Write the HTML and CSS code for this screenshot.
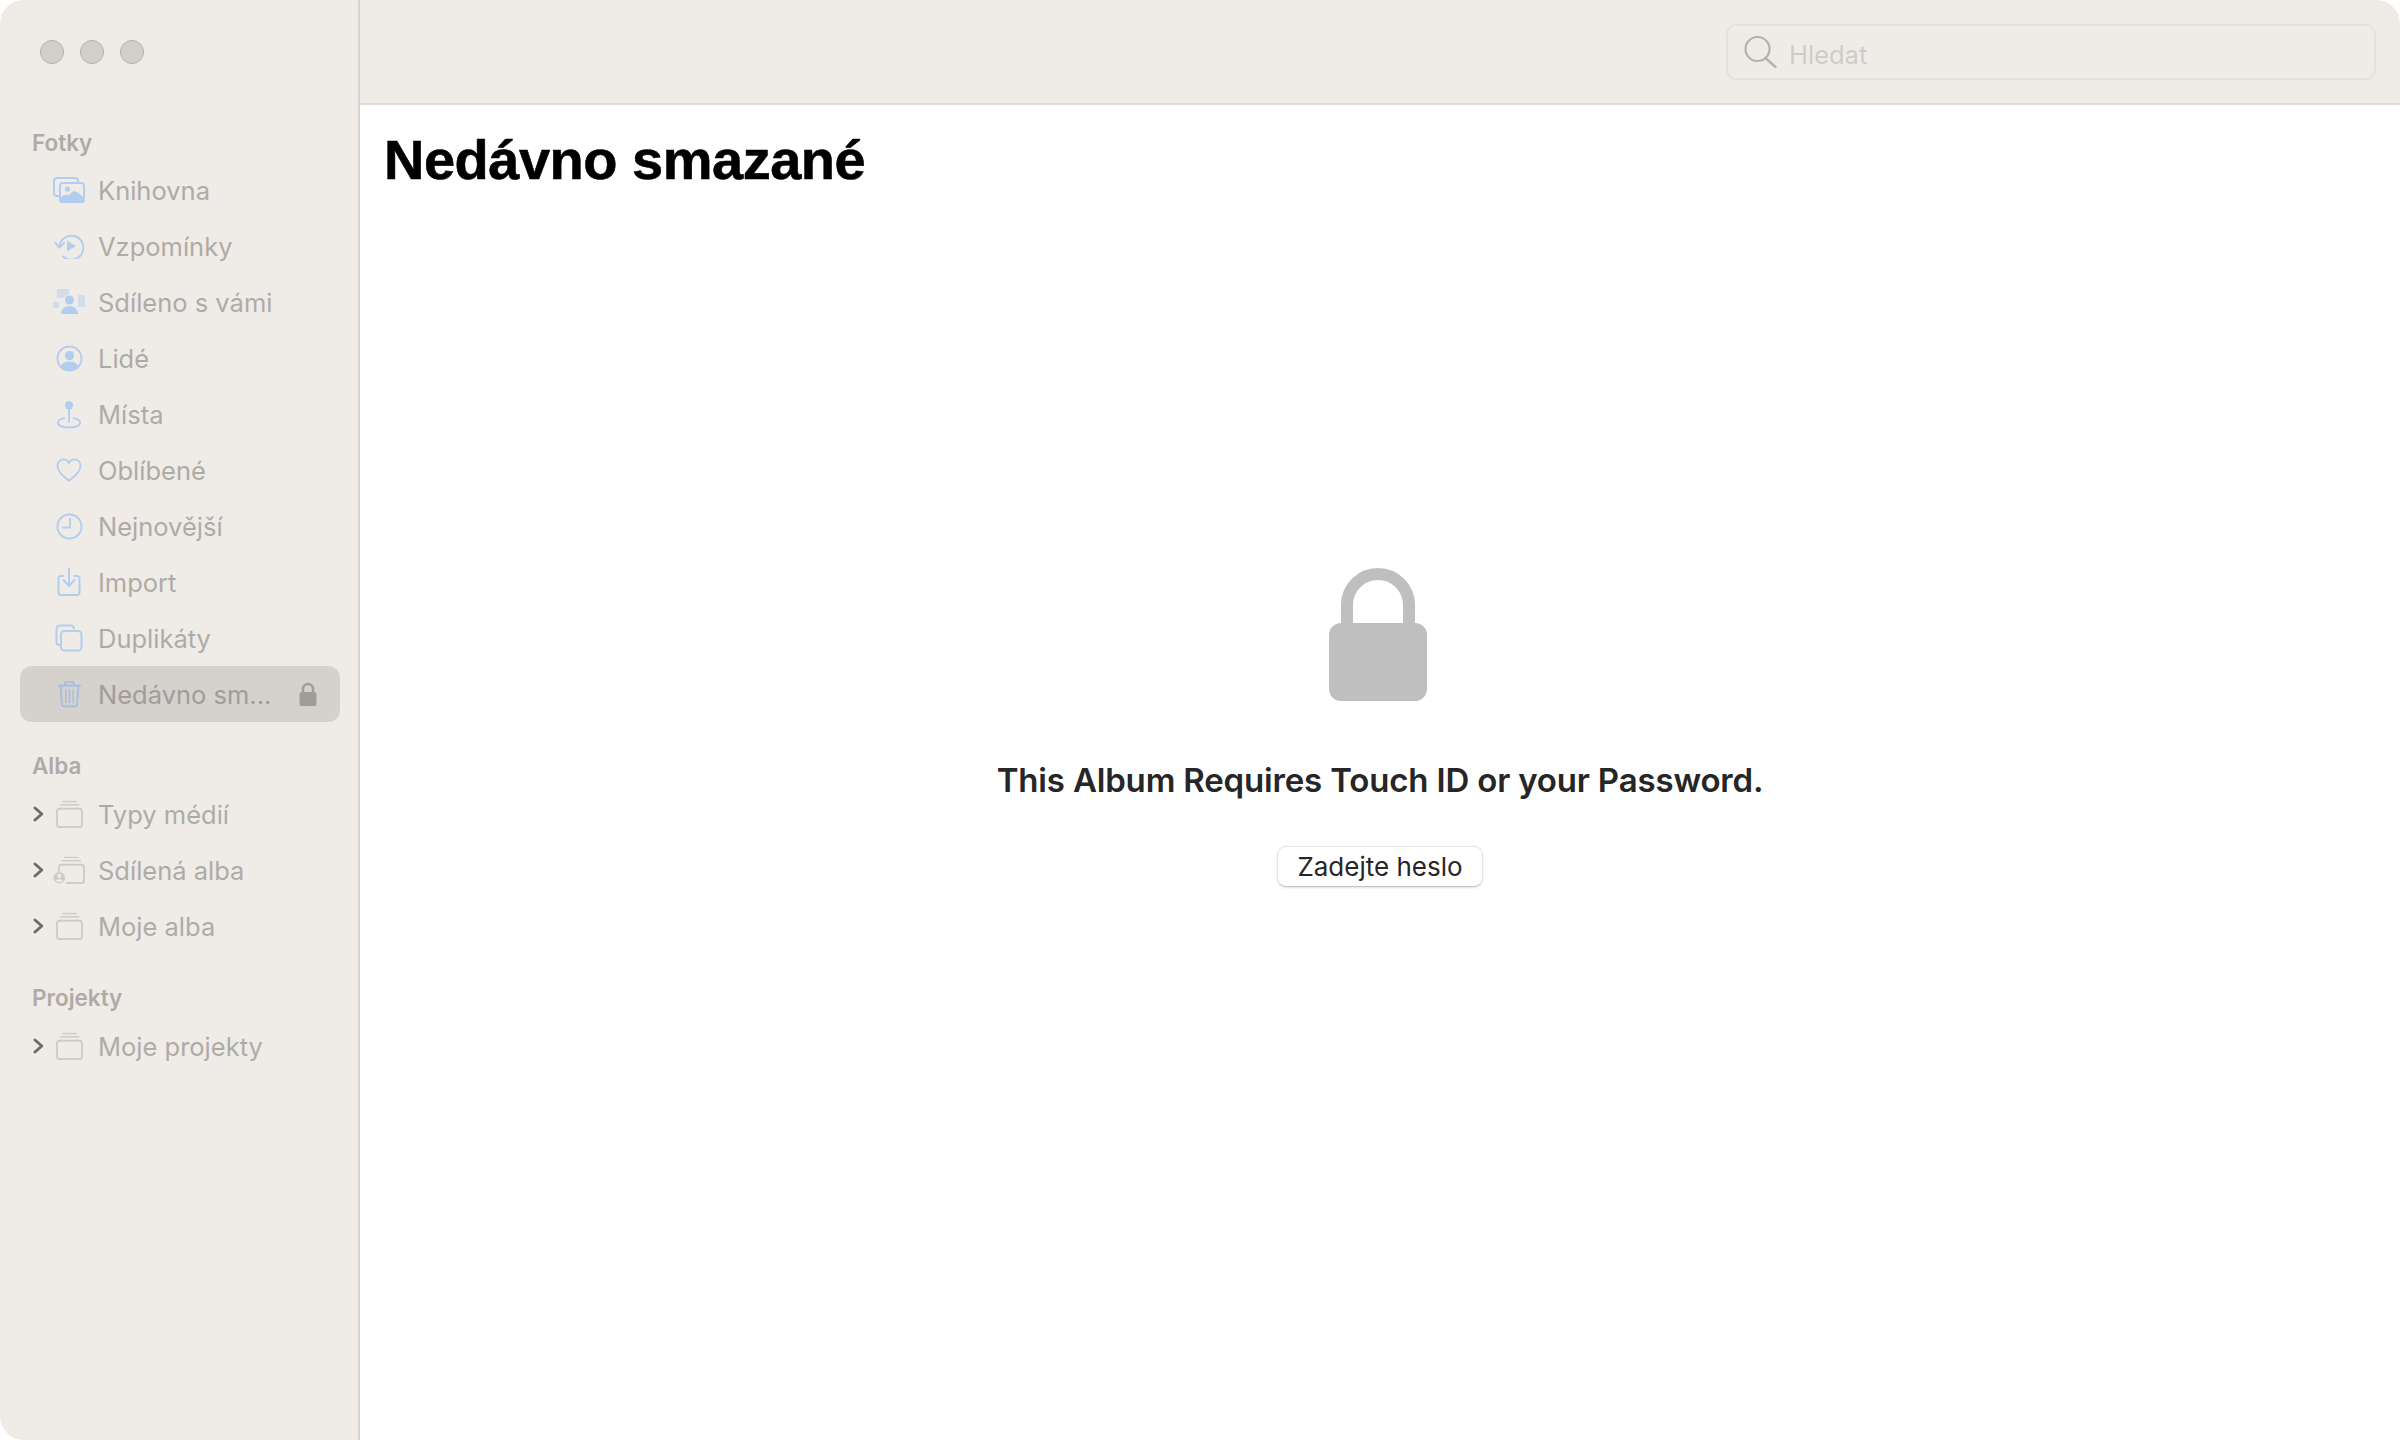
FILE: index.html
```html
<!DOCTYPE html>
<html lang="cs">
<head>
<meta charset="utf-8">
<title>Fotky</title>
<link rel="stylesheet" href="styles.css">
</head>
<body>
<div class="window">
  <aside class="sidebar">
    <div class="traffic"><span class="dot"></span><span class="dot"></span><span class="dot"></span></div>
    <div class="sec-title first">Fotky</div>
    <div class="row">
      <svg class="ico blue" width="32" height="26" viewBox="0 0 32 26"><rect x="1" y="1" width="24" height="18" rx="3" fill="none" stroke="currentColor" stroke-width="2"/><rect x="7" y="6" width="24" height="19" rx="3" fill="#efece7" stroke="currentColor" stroke-width="2"/><circle cx="14.500" cy="12" r="2.600" fill="currentColor"/><path d="M6 23c2-3 5-6 8-5 3 .5 4-3 7-4 3 0 7 4 11 8v1a3 3 0 0 1-3 3H9a3 3 0 0 1-3-3z" fill="currentColor"/></svg>
      <span class="label">Knihovna</span>
    </div>
    <div class="row">
      <svg class="ico blue" width="30" height="26" viewBox="0 0 30 26"><path d="M5.500 13A12 12 0 1 1 9 23.400" fill="none" stroke="currentColor" stroke-width="2" stroke-linecap="round"/><path d="M1.500 10l4 4.500 4.500-4.500" fill="none" stroke="currentColor" stroke-width="2" stroke-linecap="round" stroke-linejoin="round"/><path d="M13 7.500l9 5.500-9 5.500z" fill="currentColor"/></svg>
      <span class="label">Vzpomínky</span>
    </div>
    <div class="row">
      <svg class="ico blue" width="32" height="26" viewBox="0 0 32 26"><path d="M4 0h12v5l-6 4H4z" fill="currentColor" opacity=".5"/><rect x="0" y="13" width="6" height="6" fill="currentColor" opacity=".5"/><rect x="25" y="6" width="7" height="12" fill="currentColor" opacity=".5"/><circle cx="16.500" cy="11" r="4.500" fill="currentColor"/><path d="M8 25c0-5 4-8 8.500-8S25 20 25 25z" fill="currentColor"/></svg>
      <span class="label">Sdíleno s vámi</span>
    </div>
    <div class="row">
      <svg class="ico blue" width="27" height="27" viewBox="0 0 28 28"><circle cx="14" cy="14" r="12.500" fill="none" stroke="currentColor" stroke-width="2"/><circle cx="14" cy="11" r="4.800" fill="currentColor"/><path d="M5 22c2-4 5-5 9-5s7 1 9 5c-2 3-5 5-9 5s-7-2-9-5z" fill="currentColor"/></svg>
      <span class="label">Lidé</span>
    </div>
    <div class="row">
      <svg class="ico blue" width="26" height="29" viewBox="0 0 28 30"><circle cx="14" cy="5" r="4.500" fill="currentColor"/><path d="M14 9v15" stroke="currentColor" stroke-width="2"/><path d="M9 19c-4 .8-7 2.500-7 5 0 3 5 5 12 5s12-2 12-5c0-2.500-3-4.200-7-5" fill="none" stroke="currentColor" stroke-width="2" stroke-linecap="round"/></svg>
      <span class="label">Místa</span>
    </div>
    <div class="row">
      <svg class="ico blue" width="26" height="24" viewBox="0 0 28 26"><path d="M14 24.500C6 19 1.500 14 1.500 8.500 1.500 4.500 4.500 1.500 8 1.500c2.700 0 4.800 1.500 6 4 1.200-2.500 3.300-4 6-4 3.500 0 6.500 3 6.500 7 0 5.500-4.500 10.500-12.500 16z" fill="none" stroke="currentColor" stroke-width="2" stroke-linejoin="round"/></svg>
      <span class="label">Oblíbené</span>
    </div>
    <div class="row">
      <svg class="ico blue" width="27" height="27" viewBox="0 0 28 28"><circle cx="14" cy="14" r="12.500" fill="none" stroke="currentColor" stroke-width="2"/><path d="M14.500 6v9H7" fill="none" stroke="currentColor" stroke-width="2" stroke-linecap="round" stroke-linejoin="round"/></svg>
      <span class="label">Nejnovější</span>
    </div>
    <div class="row">
      <svg class="ico blue" width="24" height="28" viewBox="0 0 24 28"><path d="M6.500 8H4A2.500 2.500 0 0 0 1.500 10.500v14A2.500 2.500 0 0 0 4 27h16a2.500 2.500 0 0 0 2.500-2.500v-14A2.500 2.500 0 0 0 20 8h-2.500" fill="none" stroke="currentColor" stroke-width="2" stroke-linecap="round"/><path d="M12 1v16M6.500 12l5.500 6 5.500-6" fill="none" stroke="currentColor" stroke-width="2" stroke-linecap="round" stroke-linejoin="round"/></svg>
      <span class="label">Import</span>
    </div>
    <div class="row">
      <svg class="ico blue" width="28" height="28" viewBox="0 0 28 28"><path d="M4.500 21A3 3 0 0 1 1.500 18V5a3.500 3.500 0 0 1 3.500-3.500h11A3.500 3.500 0 0 1 19 4.500" fill="none" stroke="currentColor" stroke-width="2" stroke-linecap="round"/><rect x="6" y="7" width="20.500" height="19.500" rx="3.500" fill="none" stroke="currentColor" stroke-width="2"/></svg>
      <span class="label">Duplikáty</span>
    </div>
    <div class="row selected">
      <svg class="ico blue" width="25" height="28" viewBox="0 0 28 30"><path d="M2 5.500h24M9 5V3.500A2 2 0 0 1 11 1.500h6a2 2 0 0 1 2 2V5" fill="none" stroke="currentColor" stroke-width="2" stroke-linecap="round"/><path d="M4 6l1.500 21a2 2 0 0 0 2 1.800h13a2 2 0 0 0 2-1.800L24 6" fill="none" stroke="currentColor" stroke-width="2"/><path d="M10 10.500v14M14 10.500v14M18 10.500v14" stroke="currentColor" stroke-width="1.500" stroke-linecap="round"/></svg>
      <span class="label">Nedávno sm...</span>
      <svg class="row-lock" width="18" height="24" viewBox="0 0 18 24"><path d="M4 11V7a5 5 0 0 1 10 0v4" fill="none" stroke="currentColor" stroke-width="2.400"/><rect x="0.500" y="10" width="17" height="14" rx="2.500" fill="currentColor"/></svg>
    </div>

    <div class="sec-title alba">Alba</div>
    <div class="row">
      <svg class="chev" width="11" height="16" viewBox="0 0 10 14"><path d="M1.800 1.500L8 7l-6.200 5.500" fill="none" stroke="currentColor" stroke-width="2.600" stroke-linecap="round" stroke-linejoin="round"/></svg>
      <svg class="ico gray" width="27" height="28" viewBox="0 0 28 28"><path d="M7 1h14M4.500 4.500h19" stroke="currentColor" stroke-width="1.500" stroke-linecap="round"/><rect x="1" y="8.500" width="26" height="19" rx="3" fill="none" stroke="currentColor" stroke-width="2"/></svg>
      <span class="label">Typy médií</span>
    </div>
    <div class="row">
      <svg class="chev" width="11" height="16" viewBox="0 0 10 14"><path d="M1.800 1.500L8 7l-6.200 5.500" fill="none" stroke="currentColor" stroke-width="2.600" stroke-linecap="round" stroke-linejoin="round"/></svg>
      <svg class="ico gray" width="32" height="28" viewBox="0 0 33 28"><path d="M12 1h14M9.500 4.500h19" stroke="currentColor" stroke-width="1.500" stroke-linecap="round"/><path d="M6 15v-3.500a3 3 0 0 1 3-3h20a3 3 0 0 1 3 3v13a3 3 0 0 1-3 3H14" fill="none" stroke="currentColor" stroke-width="2" stroke-linecap="round"/><circle cx="6.500" cy="22" r="6" fill="currentColor"/><circle cx="6.500" cy="20" r="2.200" fill="#efece7"/><path d="M2.800 26c.5-2 2-2.800 3.700-2.800s3.200.8 3.700 2.800z" fill="#efece7"/></svg>
      <span class="label">Sdílená alba</span>
    </div>
    <div class="row">
      <svg class="chev" width="11" height="16" viewBox="0 0 10 14"><path d="M1.800 1.500L8 7l-6.200 5.500" fill="none" stroke="currentColor" stroke-width="2.600" stroke-linecap="round" stroke-linejoin="round"/></svg>
      <svg class="ico gray" width="27" height="28" viewBox="0 0 28 28"><path d="M7 1h14M4.500 4.500h19" stroke="currentColor" stroke-width="1.500" stroke-linecap="round"/><rect x="1" y="8.500" width="26" height="19" rx="3" fill="none" stroke="currentColor" stroke-width="2"/></svg>
      <span class="label">Moje alba</span>
    </div>

    <div class="sec-title projekty">Projekty</div>
    <div class="row">
      <svg class="chev" width="11" height="16" viewBox="0 0 10 14"><path d="M1.800 1.500L8 7l-6.200 5.500" fill="none" stroke="currentColor" stroke-width="2.600" stroke-linecap="round" stroke-linejoin="round"/></svg>
      <svg class="ico gray" width="27" height="28" viewBox="0 0 28 28"><path d="M7 1h14M4.500 4.500h19" stroke="currentColor" stroke-width="1.500" stroke-linecap="round"/><rect x="1" y="8.500" width="26" height="19" rx="3" fill="none" stroke="currentColor" stroke-width="2"/></svg>
      <span class="label">Moje projekty</span>
    </div>
  </aside>

  <main class="main">
    <header class="toolbar">
      <div class="search">
        <svg class="search-ico" width="33" height="32" viewBox="0 0 33 32"><circle cx="13.500" cy="13" r="12" fill="none" stroke="currentColor" stroke-width="2.200"/><path d="M21.500 22l10 9" stroke="currentColor" stroke-width="2.400" stroke-linecap="round"/></svg>
        <span class="placeholder">Hledat</span>
      </div>
    </header>
    <section class="content">
      <h1 class="title">Nedávno smazané</h1>
      <div class="locked">
        <svg class="big-lock" width="98" height="133" viewBox="0 0 98 133"><path d="M18 62V37a31 31 0 0 1 62 0v25" fill="none" stroke="currentColor" stroke-width="12"/><rect x="0" y="55" width="98" height="78" rx="12" fill="currentColor"/></svg>
        <p class="message">This Album Requires Touch ID or your Password.</p>
        <button class="pw-btn" type="button">Zadejte heslo</button>
      </div>
    </section>
  </main>
</div>
</body>
</html>
```

FILE: styles.css
```css
* { box-sizing: border-box; }
html, body { margin: 0; padding: 0; height: 100%; background: #fff; }
body { font-family: "Inter", "Liberation Sans", sans-serif; }

.window {
  display: flex;
  width: 2400px;
  height: 1440px;
  background: #fff;
  border-radius: 24px;
  overflow: hidden;
}

.sidebar {
  flex: 0 0 360px;
  background: #efece7;
  border-right: 2px solid #d8d5d0;
  padding: 0 18px 0 20px;
  display: flex;
  flex-direction: column;
}

.traffic { display: flex; gap: 16px; padding: 40px 0 0 20px; height: 104px; }
.dot {
  width: 24px; height: 24px; border-radius: 50%;
  background: #d3d0cb; border: 1px solid #b4b1ac;
}

.sec-title {
  font-size: 22.5px; font-weight: 600; color: #aeaba6;
  height: 30px; line-height: 30px; padding-left: 12px;
  margin: 0 0 5px;
}
.sec-title.first { margin-top: 24px; margin-bottom: 4px; }
.sec-title.alba { margin-top: 29px; }
.sec-title.projekty { margin-top: 29px; }

.row {
  height: 56px;
  flex: none;
  display: grid;
  grid-template-columns: 34px 32px 1fr 44px;
  align-items: center;
  border-radius: 12px;
  font-size: 25.5px;
  color: #aeaba6;
}
.row.selected { background: #d5d1cc; color: #a09d99; }
.label { grid-column: 3; margin-left: 12px; white-space: nowrap; }

.ico { grid-column: 2; justify-self: center; margin-left: -2px; }
.ico.blue { color: #b3cdee; }
.row.selected .ico.blue { color: #9fbde6; }
.ico.gray { color: #cfccc7; }

.chev { grid-column: 1; margin-left: 13px; color: #6e6b67; }
.row-lock { grid-column: 4; color: #a09d99; margin-left: 3px; }

.main { flex: 1; display: flex; flex-direction: column; min-width: 0; }

.toolbar {
  height: 105px;
  flex: none;
  background: #efece7;
  border-bottom: 2px solid #e0ddd9;
  display: flex;
  justify-content: flex-end;
  padding: 24px 24px 0 0;
}

.search {
  width: 650px; height: 56px;
  border: 2px solid #e4e1dc;
  border-radius: 10px;
  display: flex; align-items: center;
  padding-left: 16px;
}
.search-ico { color: #b5b2ad; flex: none; }
.placeholder { font-size: 25.5px; color: #cfccc7; margin: 4px 0 0 12px; }

.content { flex: 1; display: flex; flex-direction: column; background: #fff; }
.title {
  margin: 22px 0 0 24px;
  font-family: "Liberation Sans", sans-serif;
  font-size: 56px; font-weight: 700; line-height: 66px; color: #000;
  letter-spacing: -0.5px;
  -webkit-text-stroke: 0.6px #000;
}

.locked {
  display: flex; flex-direction: column; align-items: center;
  margin-top: 375px;
}
.big-lock { color: #bfbfbf; margin-left: -5px; }
.message {
  margin: 56px 0 0;
  font-size: 33px; font-weight: 600; color: #262626; line-height: 46px;
  letter-spacing: -0.17px;
}
.pw-btn {
  margin-top: 43px;
  width: 206px; height: 41px;
  background: #fff;
  border: 1px solid #e4e4e4;
  border-bottom-color: #c4c4c4;
  border-radius: 9px;
  box-shadow: 0 1px 2px rgba(0,0,0,.12);
  font-family: inherit; font-size: 26px; color: #262626;
  padding: 0;
}
```
